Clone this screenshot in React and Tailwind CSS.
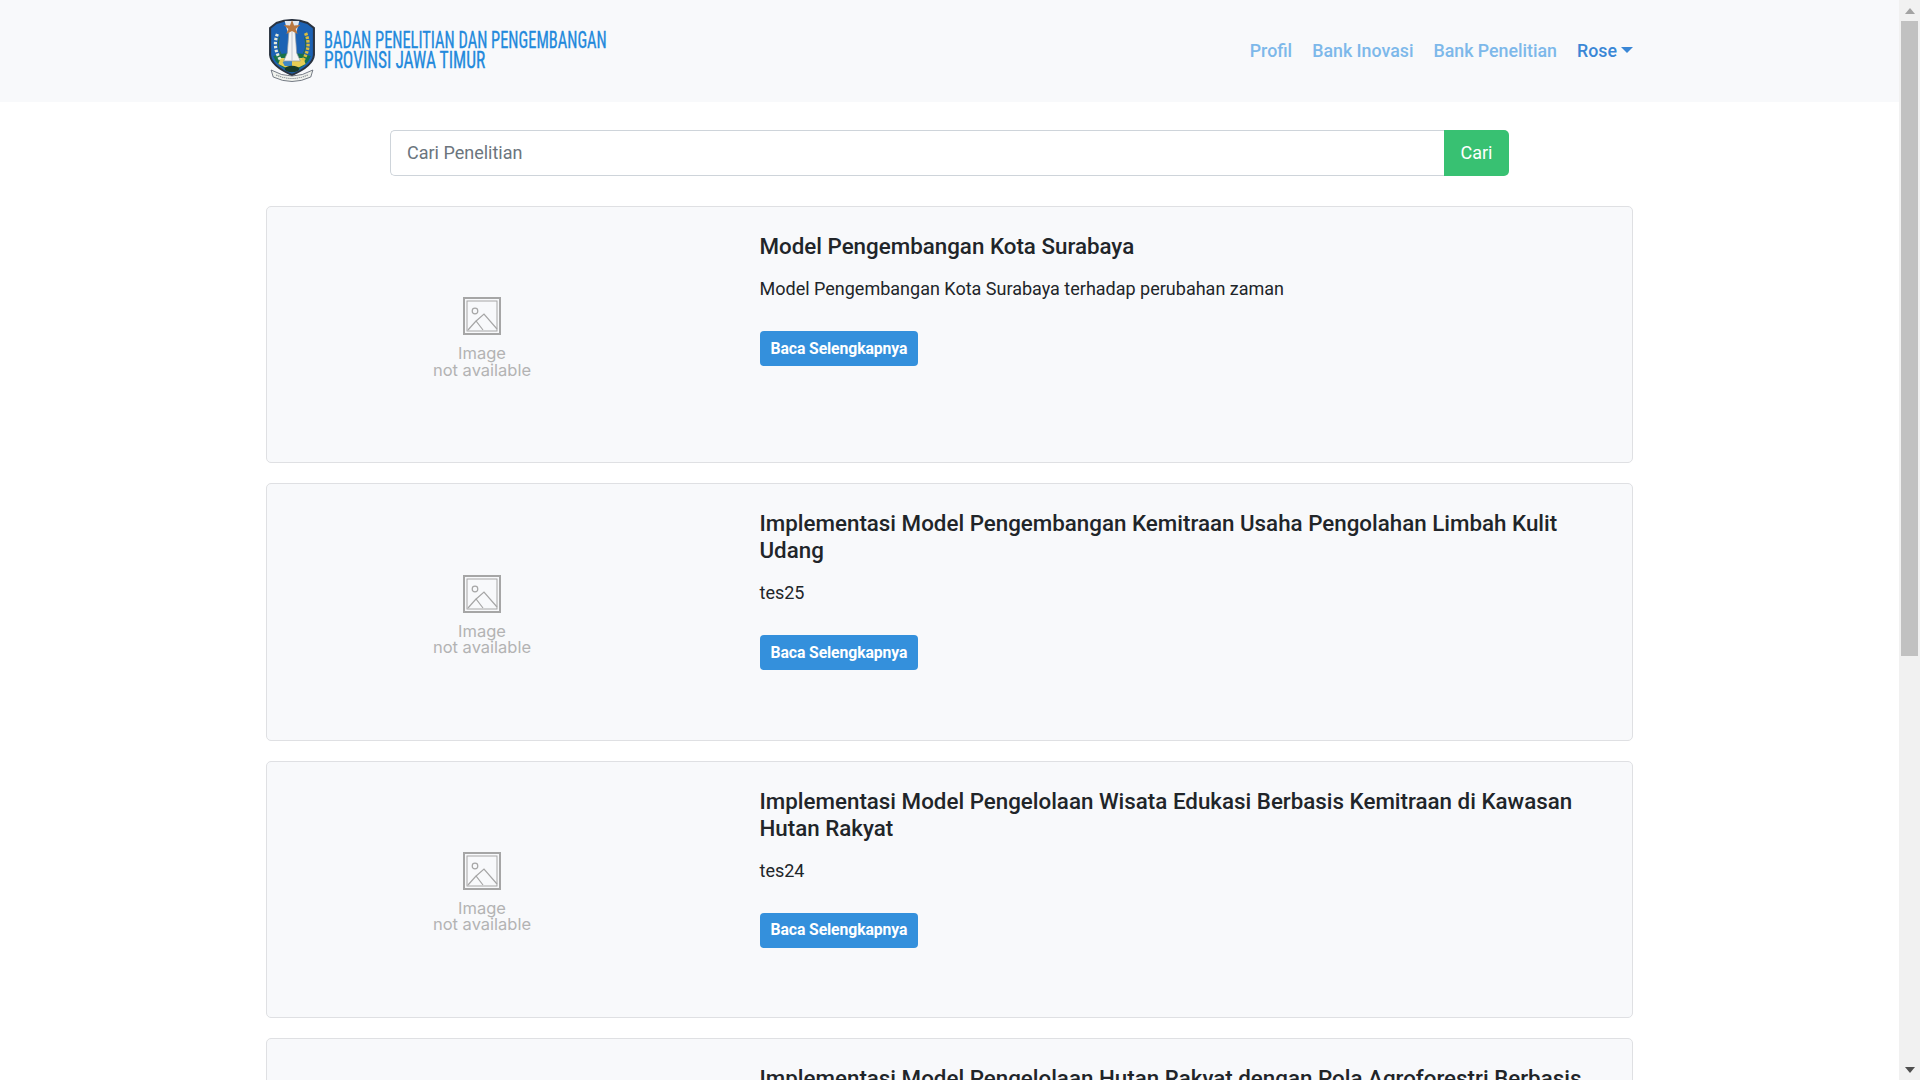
const posts = [
  {
    title: 'Model Pengembangan Kota Surabaya',
    body: 'Model Pengembangan Kota Surabaya terhadap perubahan zaman',
  },
  {
    title: 'Implementasi Model Pengembangan Kemitraan Usaha Pengolahan Limbah Kulit Udang',
    body: 'tes25',
  },
  {
    title: 'Implementasi Model Pengelolaan Wisata Edukasi Berbasis Kemitraan di Kawasan Hutan Rakyat',
    body: 'tes24',
  },
  {
    title: 'Implementasi Model Pengelolaan Hutan Rakyat dengan Pola Agroforestri Berbasis Masyarakat',
    body: 'tes23',
  },
];

function Crest() {
  return (
    <svg width="48" height="64" viewBox="0 0 46 64" preserveAspectRatio="none">
      {/* shield */}
      <path d="M2 9 L8 4 Q23 -2 38 4 L44 9 L44 36 Q43 47 23 56 Q3 47 2 36 Z" fill="#1c62b4" stroke="#2a3340" strokeWidth="2" />
      <path d="M16 2 L30 2 L27 14 L19 14 Z" fill="#dfe8f2" />
      {/* green land and yellow band */}
      <path d="M5 37 Q23 31 41 37 Q38 47 23 53 Q8 47 5 37 Z" fill="#17724a" />
      <path d="M12 39 L34 39 L36 45 Q30 49 23 50 Q16 49 10 45 Z" fill="#e7cd55" />
      <path d="M14 43 L23 39 L23 47 L16 47 Z" fill="#3f88c9" />
      {/* monument */}
      <path d="M20 13 Q23 8 26 13 L27.5 34 L31 42 L15 42 L18.5 34 Z" fill="#f4f4f4" stroke="#8f98a3" strokeWidth="0.7" />
      <path d="M23 11 L23 42" stroke="#c3c8ce" strokeWidth="1" />
      {/* star */}
      <path d="M23 1 L25 6.5 L31 6 L26.5 10 L28.5 15 L23 12 L17.5 15 L19.5 10 L15 6 L21 6.5 Z" fill="#b9773f" />
      {/* cotton and rice */}
      <path d="M9 15 Q4 28 12 41" fill="none" stroke="#e6eadb" strokeWidth="3" strokeDasharray="2.5 1.5" />
      <path d="M11 18 Q8 28 13 36" fill="none" stroke="#2b6a4a" strokeWidth="1" />
      <path d="M36 14 Q42 28 33 42" fill="none" stroke="#dcbc3a" strokeWidth="3.2" strokeDasharray="2.5 1.2" />
      <path d="M35 18 Q38 28 33 36" fill="none" stroke="#2b6a4a" strokeWidth="1" />
      {/* ribbon */}
      <path d="M3 51 Q23 63 43 51 L41 58 Q23 67 5 58 Z" fill="#eff1ec" stroke="#58606c" strokeWidth="0.8" />
      <ellipse cx="23" cy="50" rx="7" ry="3.2" fill="#183a29" />
      <path d="M8 56 Q23 63 38 56" fill="none" stroke="#6a717c" strokeWidth="1" strokeDasharray="1 1" />
    </svg>
  );
}

function PlaceholderImage() {
  return (
    <div className="mt-[6px] flex w-[124px] flex-col items-center">
      <svg width="38" height="38" viewBox="0 0 38 38" fill="none" stroke="#a6a6a6">
        <rect x="1" y="1" width="36" height="36" strokeWidth="2" />
        <rect x="4" y="4" width="30" height="30" strokeWidth="1" />
        <circle cx="12" cy="14" r="2.8" strokeWidth="1.2" />
        <path d="M5 33 L13 24 L20 33 M12 25 L21 17 L34 32" strokeWidth="1.2" />
      </svg>
      <p className="mt-[10px] text-center font-['Inter',sans-serif] text-[16.5px] leading-[16.5px] text-[#b3b3b3]">
        Image
        <br />
        not available
      </p>
    </div>
  );
}

function PostCard({ post }) {
  return (
    <div className="flex h-[257.4px] shrink-0 rounded-[5px] border border-[#dfe0e3] bg-[#f8f9fb]">
      <div className="flex w-[430px] shrink-0 items-center justify-center">
        <PlaceholderImage />
      </div>
      <div className="flex-1 pt-[26px] pl-[62.5px] pr-[40px]">
        <h3 className="text-[22.35px] leading-[27px] font-medium text-[#212529]">{post.title}</h3>
        <p className="mt-[15px] text-[18px] leading-[27px] text-[#212529]">{post.body}</p>
        <a className="mt-[29px] inline-block rounded-[4px] bg-[#3490dc] px-[11px] py-[7.5px] text-[15.75px] leading-[20px] font-bold tracking-[-0.1px] text-white">
          Baca Selengkapnya
        </a>
      </div>
    </div>
  );
}

function Scrollbar() {
  return (
    <div className="flex h-screen w-[21px] shrink-0 flex-col items-center bg-[#f1f1f1]">
      <div className="flex h-[21px] w-full items-center justify-center">
        <svg width="10" height="6" viewBox="0 0 10 6"><path d="M5 0 L10 6 L0 6 Z" fill="#a3a3a3" /></svg>
      </div>
      <div className="h-[635px] w-[17px] bg-[#c1c1c1]" />
      <div className="flex-1" />
      <div className="flex h-[21px] w-full items-center justify-center">
        <svg width="10" height="6" viewBox="0 0 10 6"><path d="M0 0 L10 0 L5 6 Z" fill="#505050" /></svg>
      </div>
    </div>
  );
}

export default function App() {
  return (
    <div className="flex h-screen overflow-hidden bg-white font-['Roboto',sans-serif]">
      <div className="min-w-0 flex-1 overflow-hidden">
        <nav className="h-[102px] bg-[#f8f9fb]">
          <div className="mx-auto flex h-full w-[1367px] items-center justify-between">
            <div className="ml-[2px] flex items-center">
              <Crest />
              <div className="ml-[8px] mb-[2px] w-[290px] text-[24.5px] leading-[20.5px] text-[#2389dc] [-webkit-text-stroke:0.35px_#2389dc] font-['Liberation_Sans_Narrow','Roboto_Condensed','Roboto',sans-serif]">
                <div className="origin-left scale-x-[0.67] whitespace-nowrap">BADAN PENELITIAN DAN PENGEMBANGAN</div>
                <div className="origin-left scale-x-[0.71] whitespace-nowrap">PROVINSI JAWA TIMUR</div>
              </div>
            </div>
            <div className="mb-[2px] flex items-center gap-[20px] text-[17.8px] leading-[27px] font-medium text-[#7db8ea]">
              <a>Profil</a>
              <a>Bank Inovasi</a>
              <a>Bank Penelitian</a>
              <a className="flex items-center text-[#3a87d6]">
                Rose
                <span className="ml-[4px] h-0 w-0 border-x-[6px] border-t-[6px] border-x-transparent border-t-[#3a87d6]" />
              </a>
            </div>
          </div>
        </nav>

        <main className="mx-auto w-[1367px]">
          <div className="mx-auto mt-[28px] flex h-[46px] w-[1119px]">
            <div className="flex flex-1 items-center rounded-l-[5px] border border-r-0 border-[#ced4da] pb-[1px] pl-[16px] text-[18px] text-[#6c757d]">
              Cari Penelitian
            </div>
            <button className="w-[65px] rounded-r-[5px] bg-[#38c172] pb-[1px] text-[18px] text-white">Cari</button>
          </div>
          <div className="mt-[30px] flex flex-col gap-[20px]">
            {posts.map((post) => (
              <PostCard key={post.body} post={post} />
            ))}
          </div>
        </main>
      </div>
      <Scrollbar />
    </div>
  );
}
